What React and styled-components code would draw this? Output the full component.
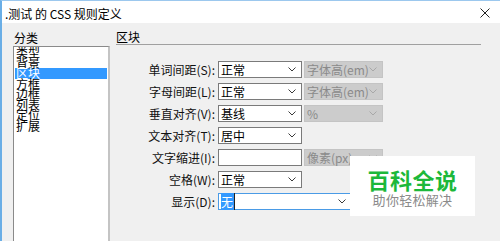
import React from 'react';
import styled, { createGlobalStyle } from 'styled-components';

const GlobalStyle = createGlobalStyle`
  html, body {
    margin: 0;
    padding: 0;
    background: #f0f0f0;
  }
  * {
    box-sizing: border-box;
  }
`;

const font = `'Noto Sans CJK SC', 'Noto Sans', sans-serif`;

const categories = ['类型', '背景', '区块', '方框', '边框', '列表', '定位', '扩展'];

const rows = [
  { label: '单词间距(S):', value: '正常', unit: '字体高(em)' },
  { label: '字母间距(L):', value: '正常', unit: '字体高(em)' },
  { label: '垂直对齐(V):', value: '基线', unit: '%' },
  { label: '文本对齐(T):', value: '居中' },
  { label: '文字缩进(I):', input: true, unit: '像素(px)' },
  { label: '空格(W):', value: '正常' },
];

const Chevron = ({ muted }) => (
  <ChevronIcon width="8" height="5" viewBox="0 0 8 5">
    <path d="M0.5 0.5 L4 4 L7.5 0.5" fill="none" stroke={muted ? '#a8a8a8' : '#3a3a3a'} strokeWidth="1" />
  </ChevronIcon>
);

const App = () => {
  return (
    <Window>
      <GlobalStyle />
      <TitleBar>
        <Title>.测试 的 CSS 规则定义</Title>
        <CloseIcon width="10" height="10" viewBox="0 0 10 10">
          <path d="M0.5 0.5 L9.5 9.5 M9.5 0.5 L0.5 9.5" stroke="#222" strokeWidth="1" />
        </CloseIcon>
      </TitleBar>
      <Body>
        <Sidebar>
          <SectionLabel>分类</SectionLabel>
          <CategoryList>
            {categories.map((c) => (
              <CategoryItem key={c} $active={c === '区块'}>
                {c}
              </CategoryItem>
            ))}
          </CategoryList>
        </Sidebar>
        <Panel>
          <PanelHeader>区块</PanelHeader>
          <Form>
            {rows.map((r) => (
              <React.Fragment key={r.label}>
                <Label>{r.label}</Label>
                {r.input ? (
                  <TextBox />
                ) : (
                  <Select>
                    <SelectText>{r.value}</SelectText>
                    <Chevron />
                  </Select>
                )}
                {r.unit ? (
                  <Select $disabled>
                    <SelectText>{r.unit}</SelectText>
                    <Chevron muted />
                  </Select>
                ) : (
                  <span />
                )}
              </React.Fragment>
            ))}
            <Label>显示(D):</Label>
            <Select $focused $width={134}>
              <SelectText>
                <Selected>无</Selected>
              </SelectText>
              <Chevron />
            </Select>
          </Form>
        </Panel>
      </Body>
      <Watermark>
        <BrandName>百科全说</BrandName>
        <Slogan>助你轻松解决</Slogan>
      </Watermark>
    </Window>
  );
};

const Window = styled.div`
  position: relative;
  width: 500px;
  height: 241px;
  overflow: hidden;
  background: #f0f0f0;
  border-left: 2px solid #6aaee6;
  border-top: 1px solid #9cc8ee;
  font-family: ${font};
  color: #000;
`;

const TitleBar = styled.div`
  height: 22px;
  background: #fff;
  display: flex;
  align-items: center;
  justify-content: space-between;
  padding: 0 10px 0 3px;
`;

const Title = styled.span`
  font-size: 12px;
  line-height: 16px;
  margin-top: 3px;
`;

const CloseIcon = styled.svg`
  display: block;
  margin-top: 1px;
`;

const Body = styled.div`
  display: flex;
  gap: 6px;
  padding: 7px 19px 0 11px;
`;

const Sidebar = styled.div`
  width: 97px;
  display: flex;
  flex-direction: column;
`;

const SectionLabel = styled.div`
  font-size: 12px;
  line-height: 16px;
  height: 16px;
  padding-left: 1px;
`;

const CategoryList = styled.div`
  height: 220px;
  background: #fff;
  border: 1px solid #8a8a8a;
  border-right: 2px solid #c4c4c4;
  padding: 0 1px 0 1px;
  overflow: hidden;
`;

const CategoryItem = styled.div`
  font-size: 12px;
  line-height: 10.5px;
  height: 10.5px;
  padding-left: 1px;
  white-space: nowrap;
  background: ${(p) => (p.$active ? '#3399ff' : 'transparent')};
  color: ${(p) => (p.$active ? '#fff' : '#000')};
`;

const Panel = styled.div`
  flex: 1;
  display: flex;
  flex-direction: column;
`;

const PanelHeader = styled.div`
  font-size: 12px;
  line-height: 14px;
  height: 15px;
  border-bottom: 1px solid #a0a0a0;
`;

const Form = styled.div`
  display: grid;
  grid-template-columns: 100px 84px 79px;
  grid-auto-rows: 17px;
  column-gap: 2px;
  row-gap: 5px;
  margin-top: 16px;
`;

const Label = styled.div`
  justify-self: end;
  font-size: 12px;
  line-height: 17px;
  padding-right: 1px;
  color: #111;
`;

const Select = styled.div`
  display: flex;
  align-items: center;
  justify-content: space-between;
  width: ${(p) => (p.$width ? `${p.$width}px` : 'auto')};
  grid-column: ${(p) => (p.$width ? 'span 2' : 'auto')};
  height: 17px;
  padding: 0 5px 0 2px;
  background: ${(p) => (p.$disabled ? '#cccccc' : '#fff')};
  border: 1px solid ${(p) => (p.$focused ? '#4a9be6' : p.$disabled ? '#c4c4c4' : '#7a7a7a')};
  color: ${(p) => (p.$disabled ? '#8a8a8a' : '#000')};
`;

const SelectText = styled.span`
  font-size: 12px;
  line-height: 15px;
  white-space: nowrap;
`;

const Selected = styled.span`
  background: #3399ff;
  color: #fff;
  padding-right: 1px;
  border-right: 1px solid #222;
`;

const ChevronIcon = styled.svg`
  display: block;
  flex-shrink: 0;
`;

const TextBox = styled.div`
  height: 17px;
  background: #fff;
  border: 1px solid #7a7a7a;
`;

const Watermark = styled.div`
  position: absolute;
  left: 348px;
  top: 155px;
  width: 125px;
  height: 60px;
  background: #fff;
  display: flex;
  flex-direction: column;
  align-items: center;
  padding-top: 10px;
`;

const BrandName = styled.div`
  font-size: 22px;
  line-height: 26px;
  font-weight: 700;
  color: #1cb83a;
  letter-spacing: 0.5px;
`;

const Slogan = styled.div`
  font-size: 13px;
  line-height: 15px;
  color: #8a8a8a;
  letter-spacing: 0.3px;
`;

export default App;
